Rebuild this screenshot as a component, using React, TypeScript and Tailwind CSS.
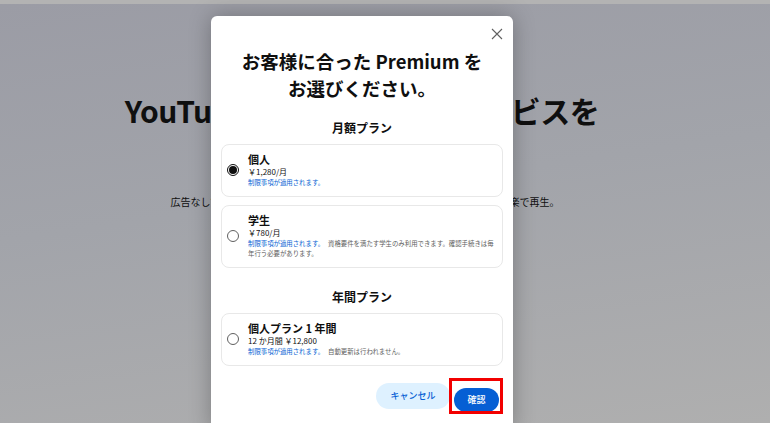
import { useState } from "react";

const jp = "font-['Noto_Sans_CJK_JP','Noto_Sans',sans-serif]";

interface Plan {
  id: string;
  name: string;
  price: string;
  extra?: string;
}

const monthly: Plan[] = [
  { id: "individual", name: "個人", price: "￥1,280/月" },
  {
    id: "student",
    name: "学生",
    price: "￥780/月",
    extra: "資格要件を満たす学生のみ利用できます。確認手続きは毎年行う必要があります。",
  },
];

const yearly: Plan[] = [
  {
    id: "annual",
    name: "個人プラン 1 年間",
    price: "12 か月間 ￥12,800",
    extra: "自動更新は行われません。",
  },
];

function Radio({ checked }: { checked: boolean }) {
  return (
    <span
      className={`flex h-[12px] w-[12px] shrink-0 items-center justify-center rounded-full border ${
        checked ? "border-[#0f0f0f]" : "border-[#606060]"
      }`}
    >
      {checked && <span className="h-[8px] w-[8px] rounded-full bg-[#0f0f0f]" />}
    </span>
  );
}

function PlanCard({
  plan,
  selected,
  onSelect,
  pb = "pb-[7px]",
}: {
  plan: Plan;
  selected: boolean;
  onSelect: () => void;
  pb?: string;
}) {
  return (
    <button
      onClick={onSelect}
      className={`flex w-full items-center gap-[9px] rounded-lg border border-[#e8e8e8] pl-[5px] pr-[5px] pt-[7px] text-left ${pb}`}
    >
      <Radio checked={selected} />
      <div className="flex flex-col">
        <span className="text-[11px] leading-[14px] font-bold text-[#0f0f0f]">{plan.name}</span>
        <span className="text-[8px] leading-[12px] text-[#0f0f0f]">{plan.price}</span>
        <span className="text-[6.4px] leading-[10.5px] text-[#606060]">
          <span className="text-[#065fd4]">制限事項が適用されます。</span>
          {plan.extra && <span className="ml-[4px]">{plan.extra}</span>}
        </span>
      </div>
    </button>
  );
}

export default function App() {
  const [selected, setSelected] = useState("individual");

  return (
    <div className={`relative h-[423px] w-[770px] overflow-hidden bg-[#b3b3b3] ${jp}`}>
      <div className="mt-[4px] h-[419px] bg-[linear-gradient(172deg,#9b9ca5_0%,#a2a4aa_45%,#afafaf_100%)]">
        <div className="flex w-[730px] flex-col items-center">
          <h1 className="mt-[84px] -translate-x-[3px] text-[30px] leading-[44px] font-bold tracking-[-0.5px] text-[#0f0f0f]">
            YouTube Premium で全サービスを
          </h1>
          <p className="mt-[62px] text-[10px] text-[#0f0f0f]">
            広告なしで動画を楽しめるほか、オフライン再生やバックグラウンドでも音楽で再生。
          </p>
        </div>
      </div>

      <div className="absolute left-[211px] top-[16px] w-[302px] rounded-t-[6px] bg-white px-[10px] pt-[32px] pb-[20px] shadow-[0_0_22px_rgba(0,0,0,0.28)]">
        <button className="absolute right-[10px] top-[12px] text-[#606060]">
          <svg width="12" height="12" viewBox="0 0 12 12" fill="none" stroke="currentColor" strokeWidth="1.1">
            <path d="M1 1L11 11M11 1L1 11" />
          </svg>
        </button>

        <h2 className="text-center text-[18.5px] leading-[27px] font-bold text-[#0f0f0f]">
          お客様に合った Premium を
          <br />
          お選びください。
        </h2>

        <h3 className="mt-[17px] text-center text-[12px] leading-[18px] font-bold text-[#0f0f0f]">月額プラン</h3>
        <div className="mt-[7px] flex flex-col gap-[8px]">
          {monthly.map((plan) => (
            <PlanCard
              key={plan.id}
              plan={plan}
              selected={selected === plan.id}
              onSelect={() => setSelected(plan.id)}
            />
          ))}
        </div>

        <h3 className="mt-[20px] text-center text-[12px] leading-[18px] font-bold text-[#0f0f0f]">年間プラン</h3>
        <div className="mt-[7px]">
          {yearly.map((plan) => (
            <PlanCard
              key={plan.id}
              plan={plan}
              selected={selected === plan.id}
              onSelect={() => setSelected(plan.id)}
              pb="pb-[8px]"
            />
          ))}
        </div>

        <div className="mt-[17px] flex justify-end gap-[4px] pr-[4px]">
          <button className="h-[26px] w-[74px] rounded-full bg-[#def1ff] text-[9px] font-medium text-[#065fd4]">
            キャンセル
          </button>
          <div className="relative">
            <button className="h-[24px] w-[45px] translate-y-[1px] rounded-full bg-[#065fd4] text-[9px] font-medium text-white">
              確認
            </button>
            <span className="pointer-events-none absolute -bottom-[3px] -left-[5px] -right-[4px] -top-[5px] border-[3px] border-[#f20000]" />
          </div>
        </div>
      </div>
    </div>
  );
}
